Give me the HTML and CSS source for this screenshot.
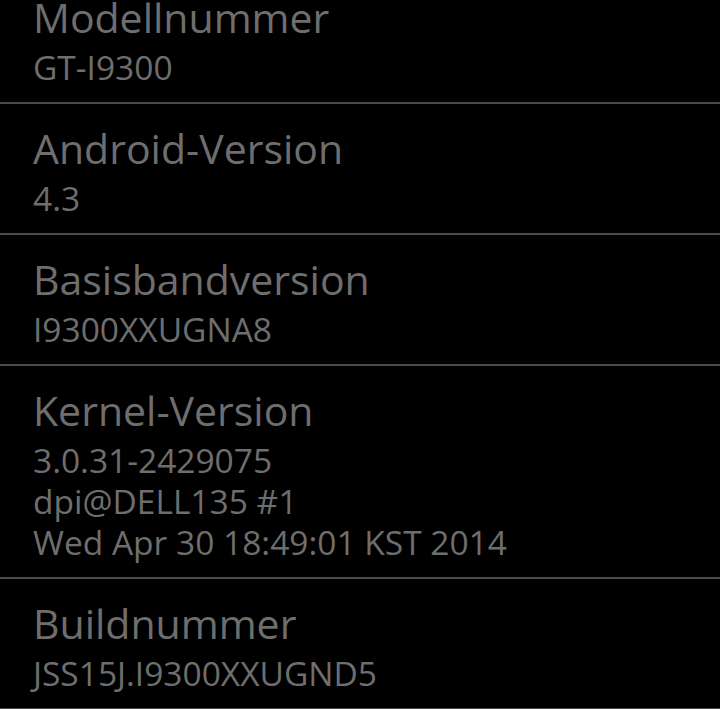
FILE: index.html
```html
<!DOCTYPE html>
<html lang="de">
<head>
  <meta charset="UTF-8">
  <meta name="viewport" content="width=device-width, initial-scale=1.0">
  <title>Geräteinformationen</title>
  <link rel="stylesheet" href="styles.css">
</head>
<body>
  <ul class="info-list">
    <li class="info-item">
      <div class="info-title">Modellnummer</div>
      <div class="info-value">GT-I9300</div>
    </li>
    <li class="info-item">
      <div class="info-title">Android-Version</div>
      <div class="info-value">4.3</div>
    </li>
    <li class="info-item">
      <div class="info-title">Basisbandversion</div>
      <div class="info-value">I9300XXUGNA8</div>
    </li>
    <li class="info-item">
      <div class="info-title">Kernel-Version</div>
      <div class="info-value">3.0.31-2429075<br>dpi@DELL135 #1<br>Wed Apr 30 18:49:01 KST 2014</div>
    </li>
    <li class="info-item">
      <div class="info-title">Buildnummer</div>
      <div class="info-value">JSS15J.I9300XXUGND5</div>
    </li>
  </ul>
</body>
</html>
```

FILE: styles.css
```css
body {
  margin: 0;
  padding: 0;
  background-color: #000;
  font-family: "Open Sans", "Liberation Sans", sans-serif;
  color: #6e6e6e;
  overflow: hidden;
}

.info-list {
  list-style: none;
  margin: -27px 0 0 0;
  padding: 0;
}

.info-item {
  padding: 20px 33px 14px 33px;
  border-bottom: 2px solid #4a4a4a;
}

.info-title {
  font-size: 41px;
  line-height: 48px;
  margin-bottom: 6px;
}

.info-value {
  font-size: 33.5px;
  line-height: 41px;
}
```
